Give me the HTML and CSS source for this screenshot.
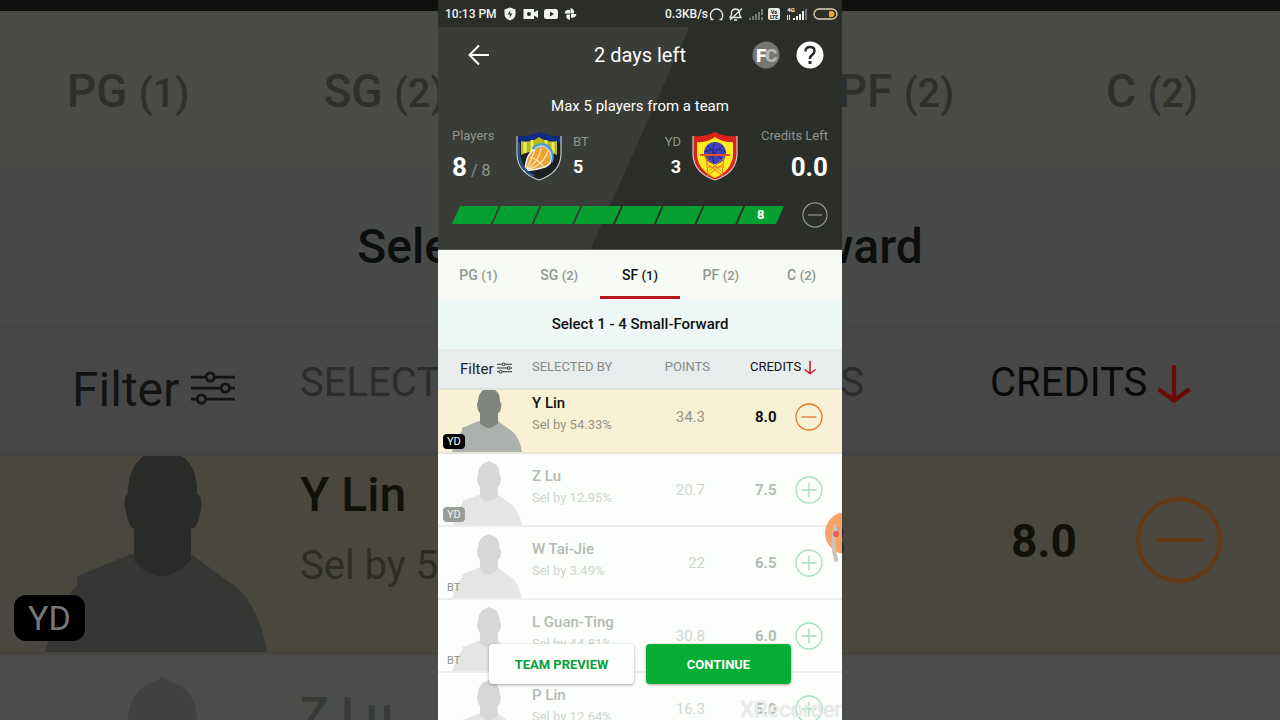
FILE: index.html
```html
<!DOCTYPE html>
<html lang="en">
<head>
    <meta charset="UTF-8">
    <meta name="viewport" content="width=device-width, initial-scale=1.0">
    <title>Create Team</title>
    <link rel="stylesheet" href="styles.css">
</head>
<body>
    <!-- Shared shapes -->
    <svg class="defs" aria-hidden="true">
        <symbol id="player" viewBox="0 0 84 72">
            <path class="shirt" d="M14 72 Q17 58 24 51 V48 L41 41 H60 L75 52 Q82 59 84 72 Z"/>
            <path class="head" d="M51 7 L45 10 Q40 14 40 22 Q38 23 40 30 Q41 33 42 33 V43 Q50 53 60 43 V33 Q62 33 63 28 Q64 23 62 22 Q62 13 57 10 Z"/>
        </symbol>
        <symbol id="filter" viewBox="0 0 16 12">
            <g fill="none" stroke="currentColor" stroke-width="1">
                <path d="M0 2h5.500M8.500 2H16M0 6h11M14 6h2M0 10h2M5.500 10H16"/>
                <circle cx="7" cy="2" r="1.500"/>
                <circle cx="12.500" cy="6" r="1.500"/>
                <circle cx="3.800" cy="10" r="1.500"/>
            </g>
        </symbol>
        <symbol id="down" viewBox="0 0 12 14">
            <path d="M6 0v12.500M0.500 8.500l5.500 4 5.500-4" fill="none" stroke="currentColor" stroke-width="1.500"/>
        </symbol>
        <symbol id="plus" viewBox="0 0 28 28">
            <g fill="none" stroke="currentColor" stroke-width="1.300">
                <circle cx="14" cy="14" r="13"/>
                <path d="M6.500 14h15M14 6.500v15"/>
            </g>
        </symbol>
        <symbol id="minus" viewBox="0 0 28 28">
            <g fill="none" stroke="currentColor" stroke-width="1.300">
                <circle cx="14" cy="14" r="13"/>
                <path d="M6.500 14h15"/>
            </g>
        </symbol>
    </svg>

    <div class="page">
        <!-- Enlarged dimmed copy behind the phone -->
        <div class="backdrop" aria-hidden="true">
            <div class="bd-top"></div>
            <div class="bd-tabs">
                <span>PG <small>(1)</small></span>
                <span>SG <small>(2)</small></span>
                <span></span>
                <span>PF <small>(2)</small></span>
                <span>C <small>(2)</small></span>
            </div>
            <div class="bd-select">Select 1 - 4 Small-Forward</div>
            <div class="bd-head">
                <span class="bd-filter">Filter <svg><use href="#filter"/></svg></span>
                <span>SELECTED BY</span>
                <span class="bd-right">POINTS</span>
                <span class="bd-credits">CREDITS <svg><use href="#down"/></svg></span>
            </div>
            <div class="bd-row">
                <div class="bd-avatar">
                    <svg viewBox="0 0 84 62"><use href="#player" y="-10" width="84" height="72"/></svg>
                    <span class="bd-badge">YD</span>
                </div>
                <div class="bd-name"><b>Y Lin</b><span>Sel by 54.33%</span></div>
                <span class="bd-points">34.3</span>
                <b class="bd-value">8.0</b>
                <svg class="bd-minus"><use href="#minus"/></svg>
            </div>
            <div class="bd-row bd-next">
                <div class="bd-avatar">
                    <svg viewBox="0 0 84 62"><use href="#player" width="84" height="72"/></svg>
                </div>
                <div class="bd-name"><b>Z Lu</b></div>
            </div>
        </div>

        <main class="phone">
            <div class="status">
                <span>10:13 PM</span>
                <svg class="status-left" width="76" height="14" viewBox="0 0 76 14" fill="#f2f4f0">
                    <path d="M7 0.500l5.500 2v4.500q0 4.500-5.500 6.500q-5.500-2-5.500-6.500V2.500z"/>
                    <path d="M7.500 3L4.500 7.500H7L6.500 11L9.500 6.500H7z" fill="#2a2d28"/>
                    <path d="M20.500 2h10.500v3.500l4-2.500v8l-4-2.500V12H20.500z"/>
                    <circle cx="26" cy="7" r="2" fill="#2a2d28"/>
                    <rect x="41" y="2" width="14" height="10" rx="2.500"/>
                    <path d="M47 4.500v5l4-2.500z" fill="#2a2d28"/>
                    <path d="M67.500 1q4.500 1 3.500 5.500h-3.500zM73.500 7q-1 4.500-5.500 3.500V7zM67 13q-4.500-1-3.500-5.500H67zM61.500 6.500q1-4.500 5.500-3.500v3.500z"/>
                </svg>
                <span class="speed">0.3KB/s</span>
                <svg width="130" height="16" viewBox="0 0 130 16">
                    <g fill="none" stroke="#e8ebe6" stroke-width="1.300">
                        <path d="M3.500 13Q1.500 10 3 6.500Q5 3 8.500 3T14 6.500Q15.500 10 13.500 13M2.500 13.500h3M11.500 13.500h3"/>
                        <path d="M22 11.500h11l-1.500-3V6q-1-3-4-3t-4 3v2.500zM22 14L34 2.500M26 14h3"/>
                    </g>
                    <path d="M41 14v-2h2v2zM44 14v-4h2v4zM47 14V8h2v6zM50 14V6h2v8zM53 9V3h2v6zM53 14v-3h2v3z" fill="#747873"/>
                    <rect x="60" y="2" width="12" height="12" rx="2" fill="#e8ebe6"/>
                    <text class="tiny-dark" x="66" y="8">Vo</text>
                    <text class="tiny-dark" x="66" y="13">LTE</text>
                    <text class="tiny-light" x="83" y="6">4G</text>
                    <g fill="#e8ebe6">
                        <path d="M79 9h1v5h-1zM81 9h1v5h-1zM85 14v-2h2v2zM88 14v-4h2v4zM91 14V8h2v6zM94 14V5h2v9z"/>
                        <path d="M97 14V3h2v11z" fill="#747873"/>
                    </g>
                    <rect x="106" y="3" width="23" height="10" rx="5" fill="none" stroke="#e3d3b0" stroke-width="1.300"/>
                    <path d="M121 5h2.500q3 0 3 3t-3 3H121z" fill="#e9a52c"/>
                </svg>
            </div>

            <header class="top">
                <div class="title-bar">
                    <button class="icon-btn back" aria-label="Back">
                        <svg width="22" height="22" viewBox="0 0 22 22"><path d="M21 11H2M11 1.500L1.500 11l9.500 9.500" fill="none" stroke="#fff" stroke-width="2"/></svg>
                    </button>
                    <h1>2 days left</h1>
                    <div class="title-actions">
                        <button class="icon-btn" aria-label="Fantasy coach">
                            <svg width="28" height="28" viewBox="0 0 28 28">
                                <circle cx="14" cy="14" r="13.500" fill="#747674"/>
                                <text class="coach-f" x="4" y="21">F</text>
                                <text class="coach-c" x="13" y="21">C</text>
                            </svg>
                        </button>
                        <button class="icon-btn" aria-label="Help">
                            <svg width="28" height="28" viewBox="0 0 28 28">
                                <circle cx="14" cy="14" r="13.500" fill="#fff"/>
                                <path d="M9.500 10.500q0-4.500 4.500-4.500t4.500 4q0 2-2.500 4t-2 4" fill="none" stroke="#2a2d28" stroke-width="2.500"/>
                                <rect x="12.500" y="20" width="3" height="3" fill="#2a2d28"/>
                            </svg>
                        </button>
                    </div>
                </div>
                <p class="rule">Max 5 players from a team</p>
                <div class="summary">
                    <div class="stat">
                        <span>Players</span>
                        <p><strong>8</strong> / 8</p>
                    </div>
                    <div class="team">
                        <svg width="46" height="50" viewBox="0 0 46 50">
                            <path d="M1 5Q14 6 23 1Q32 6 45 5V24Q44 42 23 49Q2 42 1 24Z" fill="#1d201e"/>
                            <path d="M1 5Q14 6 23 1Q32 6 45 5V12Q32 12 23 6Q14 12 1 12Z" fill="#102c85"/>
                            <path d="M5 10Q15 12 23 6Q31 12 41 10V24Q33 20 23 20Q13 20 5 24Z" fill="#b9b81c"/>
                            <path d="M9 11v11M16 9v12M30 9v12M37 11v11" stroke="#ece95c" stroke-width="3"/>
                            <path d="M9 40Q10 22 20 17Q29 12 34 20Q39 31 29 36Q20 39 9 40Z" fill="#f3a02e" stroke="#eef6f4" stroke-width="1.500"/>
                            <path d="M17 18Q25 11 32 16Q38 22 35 31" fill="none" stroke="#4b9dc8" stroke-width="3.500"/>
                            <path d="M19 17Q27 12 33 19Q37 25 34 31" fill="none" stroke="#e6f3f5" stroke-width="1"/>
                            <path d="M10 39Q16 29 19 18M10 39Q23 31 25 17M10 39Q27 35 32 20M14 26Q23 29 28 36" fill="none" stroke="#f7eccb" stroke-width="1.200"/>
                            <path d="M1 5V24Q2 42 23 49Q44 42 45 24V5" fill="none" stroke="#c6cace" stroke-width="1.200"/>
                            <path d="M3 12V24Q5 39 18 45" fill="none" stroke="#264f9a" stroke-width="2"/>
                        </svg>
                        <div><span>BT</span><strong>5</strong></div>
                    </div>
                    <div class="team team-right">
                        <div><span>YD</span><strong>3</strong></div>
                        <svg width="46" height="50" viewBox="0 0 46 50">
                            <path d="M1 5Q14 6 23 1Q32 6 45 5V24Q44 42 23 49Q2 42 1 24Z" fill="#d92219"/>
                            <path d="M5 11Q15 12 23 6Q31 12 41 11V25Q39 40 23 47Q7 40 5 25Z" fill="#ffed20"/>
                            <circle cx="23" cy="22" r="11" fill="#3e42bd"/>
                            <path d="M12 21Q23 16 34 21M23 11Q19 21 22 33M15 14Q22 22 32 30M31 14Q23 21 16 30" fill="none" stroke="#252b76" stroke-width="1"/>
                            <path d="M8 24H38" stroke="#e65023" stroke-width="2"/>
                            <path d="M14 25l2 20M32 25l-2 20M15 33l15 11M31 33L16 44M14 27l15 13M32 27L17 40M16 36h14" fill="none" stroke="#e8761e" stroke-width="1"/>
                            <path d="M1 5V24Q2 42 23 49Q44 42 45 24V5" fill="none" stroke="#d7c9c6" stroke-width="1.200"/>
                        </svg>
                    </div>
                    <div class="stat stat-right">
                        <span>Credits Left</span>
                        <p><strong>0.0</strong></p>
                    </div>
                </div>
                <div class="progress">
                    <ol>
                        <li></li><li></li><li></li><li></li><li></li><li></li><li></li><li>8</li>
                    </ol>
                    <button class="icon-btn clear" aria-label="Clear team"><svg width="26" height="26"><use href="#minus"/></svg></button>
                </div>
            </header>

            <nav class="tabs">
                <a href="#pg">PG <small>(1)</small></a>
                <a href="#sg">SG <small>(2)</small></a>
                <a href="#sf" class="active">SF <small>(1)</small></a>
                <a href="#pf">PF <small>(2)</small></a>
                <a href="#c">C <small>(2)</small></a>
            </nav>
            <h2>Select 1 - 4 Small-Forward</h2>

            <table class="players">
                <thead>
                    <tr>
                        <th class="col-avatar"><button class="filter">Filter <svg width="15" height="12"><use href="#filter"/></svg></button></th>
                        <th class="col-name">SELECTED BY</th>
                        <th class="col-points">POINTS</th>
                        <th class="col-credits sorted" colspan="2">CREDITS <svg width="12" height="14"><use href="#down"/></svg></th>
                    </tr>
                </thead>
                <tbody>
                    <tr class="selected">
                        <td class="avatar"><svg viewBox="0 0 84 62" width="84" height="62"><use href="#player" y="-10" width="84" height="72"/></svg><span class="badge">YD</span></td>
                        <td class="name"><b>Y Lin</b><span class="sel">Sel by 54.33%</span></td>
                        <td class="points">34.3</td>
                        <td class="credits">8.0</td>
                        <td class="action"><button class="icon-btn" aria-label="Remove Y Lin"><svg width="28" height="28"><use href="#minus"/></svg></button></td>
                    </tr>
                    <tr>
                        <td class="avatar"><svg width="84" height="71"><use href="#player"/></svg><span class="badge">YD</span></td>
                        <td class="name"><b>Z Lu</b><span class="sel">Sel by 12.95%</span></td>
                        <td class="points">20.7</td>
                        <td class="credits">7.5</td>
                        <td class="action"><button class="icon-btn" aria-label="Add Z Lu"><svg width="28" height="28"><use href="#plus"/></svg></button></td>
                    </tr>
                    <tr>
                        <td class="avatar"><svg width="84" height="71"><use href="#player"/></svg><span class="badge plain">BT</span></td>
                        <td class="name"><b>W Tai-Jie</b><span class="sel">Sel by 3.49%</span></td>
                        <td class="points">22</td>
                        <td class="credits">6.5</td>
                        <td class="action"><button class="icon-btn" aria-label="Add W Tai-Jie"><svg width="28" height="28"><use href="#plus"/></svg></button></td>
                    </tr>
                    <tr>
                        <td class="avatar"><svg width="84" height="71"><use href="#player"/></svg><span class="badge plain">BT</span></td>
                        <td class="name"><b>L Guan-Ting</b><span class="sel">Sel by 44.81%</span></td>
                        <td class="points">30.8</td>
                        <td class="credits">6.0</td>
                        <td class="action"><button class="icon-btn" aria-label="Add L Guan-Ting"><svg width="28" height="28"><use href="#plus"/></svg></button></td>
                    </tr>
                    <tr>
                        <td class="avatar"><svg width="84" height="71"><use href="#player"/></svg></td>
                        <td class="name"><b>P Lin</b><span class="sel">Sel by 12.64%</span></td>
                        <td class="points">16.3</td>
                        <td class="credits">5.0</td>
                        <td class="action"><button class="icon-btn" aria-label="Add P Lin"><svg width="28" height="28"><use href="#plus"/></svg></button></td>
                    </tr>
                </tbody>
            </table>

            <div class="bottom-actions">
                <button class="preview">TEAM PREVIEW</button>
                <button class="continue">CONTINUE</button>
            </div>
            <svg class="float-ball" width="18" height="56" viewBox="0 0 18 56">
                <circle cx="22" cy="23" r="21" fill="#f9a268"/>
                <path d="M12 16Q7 32 12 50" fill="none" stroke="#c9c4bd" stroke-width="4" stroke-linecap="round"/>
                <path d="M12 16Q16 18 14 25" fill="none" stroke="#c9a38c" stroke-width="2"/>
                <circle cx="12" cy="24" r="3" fill="#e2605a"/>
            </svg>
            <span class="watermark">XRecorder</span>
        </main>
    </div>
</body>
</html>
```

FILE: styles.css
```css
* {
    box-sizing: border-box;
}
body {
    margin: 0;
    font-family: Roboto, "Noto Sans", sans-serif;
    background: #4b4d4b;
    color: #111;
}
h1, h2, p, ol {
    margin: 0;
    padding: 0;
}
button {
    font-family: inherit;
    color: inherit;
    border: 0;
    padding: 0;
    background: none;
    cursor: pointer;
}
.defs {
    position: absolute;
    width: 0;
    height: 0;
}
.head { fill: var(--head); }
.shirt { fill: var(--shirt); }

.page {
    position: relative;
    display: flex;
    justify-content: center;
    height: 100vh;
    overflow: hidden;
}

/* backdrop */
.backdrop {
    position: absolute;
    inset: 0;
    overflow: hidden;
    white-space: nowrap;
}
.bd-top {
    height: 11px;
    background: #0e110d;
}
.bd-tabs {
    display: grid;
    grid-template-columns: repeat(5, 1fr);
    height: 154px;
    line-height: 160px;
    text-align: center;
    font-size: 46px;
    font-weight: 500;
    color: #2d302c;
    background: #4a4b47;
}
.bd-tabs small {
    font-size: 40px;
}
.bd-select {
    height: 158px;
    line-height: 164px;
    text-align: center;
    font-size: 48px;
    font-weight: 500;
    color: #0c0e0d;
    background: #484a49;
}
.bd-head {
    display: grid;
    grid-template-columns: 300px 1fr 264px 416px;
    height: 133px;
    line-height: 120px;
    color: #2b2d2c;
    background: #474747;
    border-bottom: 5px solid #434343;
    font-size: 40px;
}
.bd-filter {
    padding-left: 72px;
    line-height: 134px;
    font-size: 48px;
    color: #111412;
}
.bd-filter svg {
    width: 44px;
    height: 36px;
}
.bd-right {
    text-align: right;
}
.bd-credits {
    padding-left: 126px;
    color: #080909;
}
.bd-credits svg {
    width: 34px;
    height: 40px;
    vertical-align: middle;
    color: #6b0808;
}
.bd-row {
    --head: #292b29;
    --shirt: #353735;
    display: grid;
    grid-template-columns: 300px 1fr 200px 230px 203px;
    height: 199px;
    background: #4a483e;
    border-bottom: 3px solid #474540;
}
.bd-avatar {
    position: relative;
}
.bd-avatar svg {
    display: block;
    width: 268px;
    height: 196px;
}
.bd-badge {
    position: absolute;
    left: 14px;
    bottom: 11px;
    padding: 0 14px;
    line-height: 46px;
    border-radius: 12px;
    font-size: 34px;
    color: #777;
    background: #000;
}
.bd-name b, .bd-name span {
    display: block;
}
.bd-name b {
    font-size: 48px;
    line-height: 78px;
    font-weight: 500;
    color: #11110c;
}
.bd-name span {
    font-size: 40px;
    line-height: 64px;
    color: #2d2c26;
}
.bd-points, .bd-value {
    line-height: 170px;
    text-align: right;
    font-size: 46px;
    font-weight: 400;
    color: #2d2c26;
}
.bd-value {
    font-weight: 700;
    color: #11110c;
}
.bd-minus {
    width: 88px;
    height: 88px;
    margin: 40px 0 0 58px;
    color: #643715;
}
.bd-next {
    --head: #40423f;
    --shirt: #464846;
    background: #4b4d4b;
}
.bd-next .bd-name b {
    line-height: 120px;
    color: #383a38;
}

/* phone */
.phone {
    position: relative;
    display: flex;
    flex-direction: column;
    width: 100%;
    max-width: 404px;
    height: 100%;
    overflow: hidden;
    background: #fbfefa;
}
.status {
    display: flex;
    flex: none;
    align-items: center;
    height: 27px;
    padding: 0 4px 0 7px;
    font-size: 12px;
    font-weight: 500;
    color: #f2f4f0;
    background: #2a2d28;
}
.status-left {
    margin-left: 6px;
}
.speed {
    margin-left: auto;
}
.tiny-dark, .tiny-light {
    font-size: 5px;
    font-weight: 900;
    text-anchor: middle;
    fill: #2a2d28;
}
.tiny-light {
    font-size: 6px;
    fill: #e8ebe6;
}
.top {
    flex: none;
    padding: 0 14px;
    color: #fff;
    background: linear-gradient(114deg, #3a3c37 50%, #2b2e29 50%);
    border-bottom: 1px solid #555;
}
.title-bar {
    display: grid;
    grid-template-columns: 1fr auto 1fr;
    align-items: center;
    height: 56px;
}
.title-bar h1 {
    font-size: 20px;
    font-weight: 400;
}
.icon-btn {
    display: block;
    justify-self: start;
}
.icon-btn svg {
    display: block;
}
.back {
    margin-left: 16px;
}
.title-actions {
    display: flex;
    justify-content: flex-end;
    gap: 16px;
    padding-right: 4px;
}
.coach-f, .coach-c {
    font-size: 19px;
    font-weight: 900;
    fill: #fff;
}
.coach-c {
    fill: #b5b7b5;
}
.rule {
    line-height: 20px;
    margin-top: 13px;
    text-align: center;
    font-size: 15px;
}
.summary {
    display: grid;
    grid-template-columns: 64px 1fr 1fr 90px;
    height: 73px;
    margin-top: 10px;
    color: #92958f;
}
.stat, .team {
    font-size: 13px;
}
.stat > span {
    display: block;
    line-height: 20px;
}
.stat p {
    line-height: 42px;
    font-size: 16px;
}
.stat strong {
    font-size: 26px;
    color: #fff;
}
.stat-right {
    text-align: right;
}
.team {
    display: flex;
    gap: 11px;
    padding-top: 5px;
}
.team span, .team strong {
    display: block;
    line-height: 22px;
}
.team strong {
    line-height: 28px;
    font-size: 18px;
    color: #fff;
}
.team-right {
    justify-content: flex-end;
    text-align: right;
}
.progress {
    display: flex;
    align-items: center;
    justify-content: space-between;
    height: 50px;
    padding-bottom: 18px;
    gap: 18px;
}
.progress ol {
    display: flex;
    flex: 1;
    list-style: none;
}
.progress li {
    flex: 1;
    height: 18px;
    line-height: 18px;
    text-align: center;
    font-size: 13px;
    font-weight: 700;
    background: #04a032;
    clip-path: polygon(8px 0, 100% 0, calc(100% - 8px) 100%, 0 100%);
}
.progress li + li {
    margin-left: -6px;
}
.clear {
    color: #92958f;
}
.tabs {
    display: grid;
    flex: none;
    grid-template-columns: repeat(5, 1fr);
    height: 50px;
    background: #f6f9f4;
}
.tabs a {
    height: 49px;
    line-height: 50px;
    text-align: center;
    text-decoration: none;
    font-size: 14px;
    font-weight: 500;
    color: #929691;
}
.tabs small {
    font-size: 13px;
}
.tabs .active {
    color: #111;
    border-bottom: 3px solid #b5161b;
}
h2 {
    flex: none;
    height: 49px;
    line-height: 49px;
    text-align: center;
    font-size: 15px;
    font-weight: 500;
    background: #edf7f5;
}

/* players list */
.players {
    width: 100%;
    flex: none;
    border-collapse: collapse;
    table-layout: fixed;
}
.players th {
    height: 40px;
    padding: 0 0 4px;
    text-align: left;
    font-size: 13px;
    font-weight: 400;
    color: #868a88;
    background: #e9ecec;
    border-bottom: 2px solid #e0e2e0;
}
.players .col-avatar {
    width: 94px;
    padding: 0 0 0 22px;
}
.players .col-points {
    width: 80px;
    padding-right: 1px;
    text-align: right;
}
.players .col-credits {
    width: 131px;
    padding-left: 39px;
    color: #111;
}
.filter {
    font-size: 15px;
    white-space: nowrap;
    color: #222;
}
.sorted svg {
    vertical-align: -4px;
    color: #c9151b;
}
.players td {
    height: 73px;
    padding: 0;
    border-bottom: 2px solid #eceeeb;
    color: #b6bab6;
}
.players b, .players .sel {
    display: block;
}
.players b {
    line-height: 22px;
    font-size: 15px;
    font-weight: 500;
}
.players .name {
    padding-bottom: 6px;
}
.players .sel {
    line-height: 22px;
    font-size: 13px;
    color: #d0d4d0;
}
.players .avatar {
    --head: #d5d8d4;
    --shirt: #e3e6e2;
    position: relative;
    vertical-align: bottom;
}
.avatar svg {
    display: block;
}
.players .points {
    padding-right: 6px;
    text-align: right;
    font-size: 15px;
    color: #d0d4d0;
}
.players .credits {
    text-align: right;
    font-size: 15px;
    font-weight: 700;
}
.players .action {
    padding-left: 18px;
    color: #a5dec2;
}
.players .col-credits + td {
    width: 64px;
}
.badge {
    position: absolute;
    left: 5px;
    bottom: 3px;
    padding: 0 4px;
    line-height: 15px;
    border-radius: 4px;
    font-size: 11px;
    color: #f0f2f0;
    background: #999c99;
}
.plain {
    color: #8e928e;
    background: none;
}
.players .selected td {
    height: 63px;
    padding-bottom: 8px;
    color: #111;
    background: #f9f1d6;
    border-color: #e8e4d6;
}
.players .selected .name {
    padding-bottom: 15px;
}
.players .selected .avatar {
    --head: #80847f;
    --shirt: #acb1ae;
    padding-bottom: 0;
}
.players .selected .sel, .players .selected .points {
    color: #96948a;
}
.players .selected .action {
    color: #df762c;
}
.selected .badge {
    color: #fff;
    background: #000;
}

/* overlays */
.bottom-actions {
    position: absolute;
    left: 51px;
    right: 51px;
    bottom: 36px;
    display: flex;
    gap: 12px;
}
.bottom-actions button {
    flex: 1;
    height: 40px;
    border-radius: 4px;
    font-size: 13px;
    font-weight: 700;
    box-shadow: 0 1px 3px rgba(0,0,0,0.35);
}
.bottom-actions .preview {
    color: #04a03a;
    background: #fdfffc;
}
.bottom-actions .continue {
    color: #fff;
    background: #04ae35;
}
.float-ball {
    position: absolute;
    right: 0;
    top: 510px;
}
.watermark {
    position: absolute;
    right: 0;
    bottom: -2px;
    font-size: 22px;
    line-height: 24px;
    font-weight: 400;
    color: rgba(255,255,255,0.7);
    text-shadow: 0 0 1px #bbb;
}
```
